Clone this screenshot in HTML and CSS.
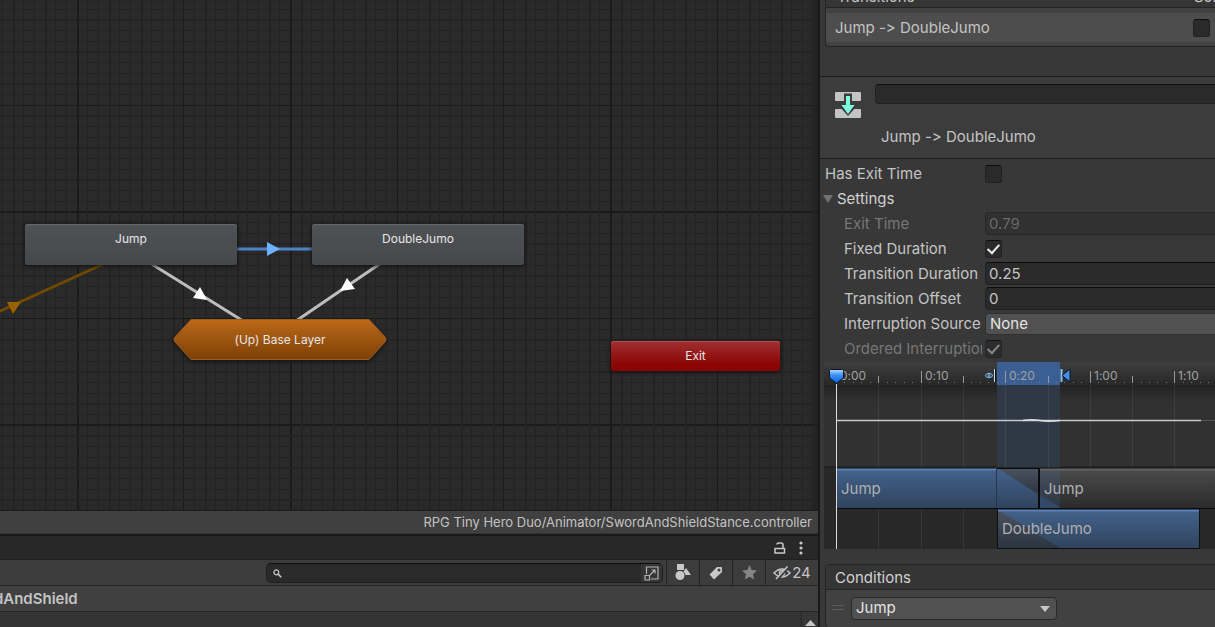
FILE: index.html
```html
<!DOCTYPE html>
<html lang="en">
<head>
  <meta charset="UTF-8">
  <title>Animator</title>
  <link rel="stylesheet" href="styles.css">
</head>
<body>
  <main class="left">
    <section class="graph">
      <svg class="canvas" width="100%" height="100%">
        <defs>
          <linearGradient id="orange" x1="0" y1="0" x2="0" y2="1">
            <stop offset="0" stop-color="#bc6918"/>
            <stop offset="1" stop-color="#7c4006"/>
          </linearGradient>
        </defs>
        <g id="grid"></g>
        <g fill="none" stroke-width="3">
          <path d="M-4 313L110 261" stroke="#704900"/>
          <path d="M237 249H313" stroke="#4f82c4"/>
          <path d="M150 263L243 321M381 263L296 321" stroke="#bdbdbd"/>
        </g>
        <path d="M7 302H21L13 314Z" fill="#986200"/>
        <path d="M267 242L280 249L267 256Z" fill="#6cb0ff"/>
        <path d="M200 287L207 300L193 298Z" fill="#fff"/>
        <path d="M347 278L355 289L340 291Z" fill="#fff"/>
        <path class="hex" d="M191 319.500H369L385 337Q387 339.500 385 342L369 359.500H191L175 342Q173 339.500 175 337Z" fill="url(#orange)" stroke="#9a5d20"/>
      </svg>
      <div class="node jump">Jump</div>
      <div class="node double-jump">DoubleJumo</div>
      <div class="node base-layer">(Up) Base Layer</div>
      <div class="node exit">Exit</div>
    </section>
    <div class="path-bar">RPG Tiny Hero Duo/Animator/SwordAndShieldStance.controller</div>

    <section class="project">
      <div class="tab-bar">
        <button class="icon-btn" aria-label="Lock">
          <svg width="12" height="14" viewBox="0 0 12 14" fill="none" stroke="#c8c8c8" stroke-width="1.500"><path d="M1 7.500H10.500V12H1ZM9 7V4Q9 2 7 2H5Q3 2 3 3.500"/></svg>
        </button>
        <button class="icon-btn" aria-label="More">
          <svg width="4" height="14" viewBox="0 0 4 14" fill="#c8c8c8"><circle cx="2" cy="2" r="1.600"/><circle cx="2" cy="7" r="1.600"/><circle cx="2" cy="12" r="1.600"/></svg>
        </button>
      </div>
      <div class="toolbar">
        <div class="search">
          <svg width="9" height="9" viewBox="0 0 10 10" fill="none" stroke="#c4c4c4" stroke-width="1.400"><circle cx="3.700" cy="3.700" r="2.700"/><path d="M5.700 5.700L9.200 9.200" stroke-width="1.800"/></svg>
          <input type="text" aria-label="Search">
          <button class="search-open" aria-label="Open search window">
            <svg width="15" height="15" viewBox="0 0 15 15" fill="none" stroke="#b4b4b4" stroke-width="1.200"><path d="M2.500 8V1H14V13H7M1 9.500H5.500V14H1ZM6 9L11 4M7.500 4H11V7.500"/></svg>
          </button>
        </div>
        <button class="tool" aria-label="Filter by type">
          <svg width="16" height="17" viewBox="0 0 16 17" fill="#c8c8c8"><rect x="2" width="7" height="6"/><circle cx="5" cy="11.500" r="4.500"/><path d="M11 4L16 11H10.500Q10 8.500 8.500 7.500Z"/></svg>
        </button>
        <button class="tool" aria-label="Filter by label">
          <svg width="14" height="14" viewBox="0 0 14 14" fill="#c8c8c8"><path fill-rule="evenodd" d="M8 1H12Q13 1 13 2V6L5.500 13Q5 13.500 4.500 13L1 9Q.5 8.500 1 8ZM10 2.500A1.500 1.500 0 1 0 10 5.500A1.500 1.500 0 1 0 10 2.500Z"/></svg>
        </button>
        <button class="tool" aria-label="Favorites">
          <svg width="15" height="15" viewBox="0 0 15 15" fill="#858585"><path d="M7.500 0L9.600 5L15 5.500L11 9.200L12.200 14.500L7.500 11.700L2.800 14.500L4 9.200L0 5.500L5.400 5Z"/></svg>
        </button>
        <button class="tool hidden-count">
          <svg width="18" height="14" viewBox="0 0 18 14" fill="none" stroke="#c4c4c4" stroke-width="1.600"><path d="M1 7Q9-1 17 7Q9 15 1 7Z"/><circle cx="9" cy="7" r="2.500"/><path d="M15.500 1L4 13.500" stroke="#3c3c3c" stroke-width="3"/><path d="M14.500 .5L3 13"/></svg>24</button>
      </div>
      <div class="breadcrumb"><span>SwordAndShield</span></div>
      <div class="assets">
        <button class="scroll-up" aria-label="Scroll up"><svg width="11" height="6"><path d="M0 6L5.500 0L11 6Z" fill="#c4c4c4"/></svg></button>
      </div>
    </section>
  </main>

  <aside class="inspector">
    <section class="transitions">
      <div class="transitions-head"><span>Transitions</span><span>Solo</span></div>
      <div class="transition-row">
        <label for="solo">Jump -&gt; DoubleJumo</label>
        <input type="checkbox" id="solo">
      </div>
    </section>

    <header class="title">
      <svg width="28" height="28" viewBox="0 0 28 28"><rect x="1" y="1" width="26" height="9" rx="1" fill="#c4c4c4"/><rect x="1" y="18" width="26" height="9" rx="1" fill="#c4c4c4"/><path d="M10 2.500H18V13H22V16L14 25L6 16V13H10Z" fill="#3c3c3c"/><path d="M12 5H16V14H20.500L14 23L7.500 14H12Z" fill="#7dffe0"/></svg>
      <div class="title-main">
        <input type="text" class="name" aria-label="Transition name">
        <h1>Jump -&gt; DoubleJumo</h1>
      </div>
    </header>

    <form class="settings">
      <div class="row"><label for="exit-on">Has Exit Time</label><input type="checkbox" id="exit-on"></div>
      <button type="button" class="foldout"><svg width="10" height="8"><path d="M0 0H10L5 8Z" fill="#727272"/></svg>Settings</button>
      <div class="row sub off"><label for="exit-time">Exit Time</label><input type="text" id="exit-time" value="0.79" disabled></div>
      <div class="row sub"><label for="fixed">Fixed Duration</label><input type="checkbox" id="fixed" checked></div>
      <div class="row sub"><label for="duration">Transition Duration</label><input type="text" id="duration" value="0.25"></div>
      <div class="row sub"><label for="offset">Transition Offset</label><input type="text" id="offset" value="0"></div>
      <div class="row sub"><label for="source">Interruption Source</label><select id="source"><option>None</option></select></div>
      <div class="row sub off"><label for="ordered">Ordered Interruption</label><input type="checkbox" id="ordered" checked disabled></div>
    </form>

    <section class="timeline">
      <svg width="100%" height="187">
        <defs>
          <linearGradient id="ruler" x1="0" y1="0" x2="0" y2="1"><stop offset="0" stop-color="#3e3e3e"/><stop offset="1" stop-color="#282828"/></linearGradient>
          <linearGradient id="shade" x1="0" y1="0" x2="0" y2="1"><stop offset="0" stop-color="#222"/><stop offset="1" stop-color="#313131"/></linearGradient>
          <linearGradient id="clip" x1="0" y1="0" x2="0" y2="1"><stop offset="0" stop-color="#44628c"/><stop offset="1" stop-color="#2f435d"/></linearGradient>
          <linearGradient id="clip-off" x1="0" y1="0" x2="0" y2="1"><stop offset="0" stop-color="#4b4b4b"/><stop offset="1" stop-color="#2b2b2b"/></linearGradient>
          <linearGradient id="clip-fade" x1="0" y1="0" x2="0" y2="1"><stop offset="0" stop-color="#4a5260"/><stop offset="1" stop-color="#2d3541"/></linearGradient>
          <linearGradient id="pin" x1="0" y1="0" x2="0" y2="1"><stop offset="0" stop-color="#b9dcff"/><stop offset=".4" stop-color="#3b90f5"/><stop offset="1" stop-color="#0a62e0"/></linearGradient>
        </defs>
        <rect width="100%" height="187" fill="#282828"/>
        <rect width="100%" height="23" fill="url(#ruler)"/>
        <rect y="23" width="100%" height="82" fill="#313131"/>
        <rect y="23" width="100%" height="16" fill="url(#shade)"/>
        <rect y="104" width="100%" height="2" fill="#222"/>
        <rect x="173" width="63" height="23" fill="#3b5f92"/>
        <rect x="173" y="23" width="63" height="82" fill="#2f3946"/>
        <g id="ticks"></g>
        <path d="M13 58.500H377" stroke="#c8c8c8" stroke-width="1.500"/>
        <path d="M377 58.500H800" stroke="#555"/>
        <path d="M199 58.500Q208 57 216 58.500T236 58.500" fill="none" stroke="#ddd" stroke-width="1.500"/>

        <rect y="106" x="12" width="100%" height="41" fill="#0c0c0c"/>
        <rect x="13" y="107" width="201" height="39" fill="url(#clip)"/>
        <path d="M175 107H214V132Z" fill="url(#clip-fade)"/>
        <rect x="216" y="107" width="100%" height="39" fill="url(#clip-off)"/>
        <rect x="216" y="107" width="20" height="39" fill="url(#clip-fade)"/>
        <path d="M216 133L236 145V146H216Z" fill="#34496a"/>
        <path d="M13 107.500H173" stroke="#5a80b5" stroke-width="2"/>
        <path d="M216 107.500H800" stroke="#646464" stroke-width="2"/>
        <path d="M172.500 107V146" stroke="#26374e"/>

        <rect x="173" y="147" width="203" height="40" fill="#0c0f14"/>
        <rect x="174" y="148" width="201" height="38" fill="url(#clip)"/>
        <path d="M174 148L236 186H174Z" fill="url(#clip-fade)"/>
        <path d="M174 148.500H375" stroke="#5a80b5" stroke-width="2"/>

        <g class="clip-text">
          <text x="17" y="132">Jump</text>
          <text x="220" y="132">Jump</text>
          <text x="178" y="172">DoubleJumo</text>
        </g>

        <path d="M12.500 22V187" stroke="#dcdcdc"/>
        <path d="M6.500 7.500H18.500Q19.500 7.500 19.500 8.500V15Q19.500 16 18.500 16.500L12.500 21.500L6.500 16.500Q5.500 16 5.500 15V8.500Q5.500 7.500 6.500 7.500Z" fill="url(#pin)" stroke="#10151c"/>
        <g fill="none" stroke="#7cc0ff"><path d="M161 13.500Q165 9 169 13.500Q165 18 161 13.500Z"/><circle cx="165" cy="13.500" r="1"/><path d="M170.500 7V20" stroke="#c4ddf8"/><path d="M171.500 7V20" stroke="#101418"/></g>
        <path d="M237.500 7V20" stroke="#83c5ff" stroke-width="2"/><path d="M246 7V20L238 13.500Z" fill="#438eea" stroke="#0e1722"/>
      </svg>
    </section>

    <section class="conditions">
      <h2>Conditions</h2>
      <div class="condition">
        <span class="handle"></span>
        <div class="picker">
          <select aria-label="Condition parameter"><option>Jump</option></select>
          <svg width="10" height="6"><path d="M0 0H10L5 6Z" fill="#c8c8c8"/></svg>
        </div>
      </div>
    </section>
  </aside>

  <script src="script.js"></script>
</body>
</html>
```

FILE: styles.css
```css
* { box-sizing: border-box; }
body { margin: 0; height: 100vh; overflow: hidden; display: grid; grid-template-columns: minmax(0, 1fr) 395px; background: #383838; color: #c4c4c4; font: 15px/20px Inter, sans-serif; font-feature-settings: "calt" 0; }
button, input, select { font: inherit; color: inherit; margin: 0; padding: 0; border: 0; border-radius: 0; background: none; }
svg { display: block; flex: none; }

/* animator graph */
.left { display: flex; flex-direction: column; min-width: 0; height: 100vh; border-right: 2px solid #191919; }
.graph { position: relative; flex: 1; min-height: 0; overflow: hidden; background: #2a2a2a; border-bottom: 1px solid #1c1c1c; box-shadow: inset -6px 0 6px -3px #1f1f1f; }
.canvas { position: absolute; left: 0; top: 0; }
.hex { filter: drop-shadow(0 2px 2px #151515); }
.node { position: absolute; font-size: 12px; line-height: 16px; text-align: center; color: #e6e6e6; border-radius: 3px; }
.jump, .double-jump { top: 224px; width: 212px; height: 41px; padding-top: 7px; background: linear-gradient(#4f5356, #46474b); box-shadow: inset 0 1px #64686a, 0 1px 4px #111; }
.jump { left: 25px; }
.double-jump { left: 312px; }
.base-layer { left: 173px; top: 319px; width: 214px; height: 41px; padding-top: 13px; }
.exit { left: 611px; top: 341px; width: 169px; height: 30px; padding-top: 7px; background: linear-gradient(#a03030, #8b0303 80%); box-shadow: inset 0 1px #b45050, 0 1px 4px #111; }
.path-bar { height: 23px; padding-right: 6px; background: #404040; border-bottom: 1px solid #333; font-size: 13px; line-height: 23px; text-align: right; white-space: nowrap; }

/* project panel */
.project { background: #3c3c3c; border-top: 2px solid #191919; }
.tab-bar { display: flex; justify-content: flex-end; align-items: center; gap: 13px; height: 24px; padding-right: 15px; background: #282828; border-bottom: 1px solid #1f1f1f; }
.toolbar { display: flex; justify-content: flex-end; height: 26px; border-bottom: 1px solid #232323; }
.search { display: flex; align-items: center; width: 397px; height: 20px; margin: 3px 3px 0 0; padding-left: 6px; background: #2a2a2a; border: 1px solid #1f1f1f; border-top-color: #0d0d0d; border-radius: 5px; overflow: hidden; }
.search input { flex: 1; min-width: 0; padding: 0 4px; }
.search-open { display: flex; align-items: center; justify-content: center; width: 21px; height: 20px; background: #353535; }
.tool { display: flex; align-items: center; justify-content: center; width: 33px; border-left: 1px solid #232323; }
.hidden-count { width: 53px; gap: 1px; }
.breadcrumb { display: flex; height: 26px; overflow: hidden; background: #404040; border-bottom: 1px solid #232323; font-weight: 600; line-height: 25px; }
.breadcrumb span { margin-left: -43px; }
.assets { display: flex; justify-content: flex-end; height: 15px; background: #333; }
.scroll-up { display: flex; justify-content: center; align-items: flex-end; width: 17px; height: 14px; border-left: 1px solid #282828; background: #373737; }

/* inspector */
.inspector { min-width: 0; height: 100vh; overflow: hidden; }
.transitions { margin: -17px 0 29px 5px; border: 1px solid #232323; border-right: 0; border-radius: 0 0 0 4px; background: #414141; }
.transitions-head { display: flex; justify-content: space-between; height: 24px; padding: 0 0 0 11px; line-height: 26px; border-bottom: 1px solid #232323; background: #353535; }
.transitions-head span:last-child { width: 21px; white-space: nowrap; }
.transition-row { display: flex; align-items: center; justify-content: space-between; height: 29px; margin: 5px 0 4px; padding: 0 5px 0 9px; background: #4d4d4d; }
input[type=checkbox] { appearance: none; display: grid; place-items: center; width: 17px; height: 18px; background: #2a2a2a; border: 1px solid #212121; border-top-color: #0d0d0d; border-radius: 3px; }
input[type=checkbox]:checked::after { content: ""; width: 5px; height: 10px; border: solid #eee; border-width: 0 2px 2px 0; transform: rotate(42deg) translate(-1px, -1px); }
.title { display: flex; height: 83px; padding: 7px 0 0 14px; background: #3c3c3c; border-top: 1px solid #1a1a1a; border-bottom: 1px solid #1a1a1a; }
.title > svg { margin-top: 7px; }
.title-main { flex: 1; margin-left: 13px; }
.name { display: block; width: 100%; height: 20px; background: #2a2a2a; border: 1px solid #212121; border-top-color: #0d0d0d; border-right: 0; border-radius: 4px 0 0 4px; }
h1, h2 { margin: 0; font-size: 15px; font-weight: 400; }
h1 { margin: 23px 0 0 6px; }
.settings { padding: 2px 0 0 5px; }
.row { display: flex; align-items: center; height: 25px; }
.row label { width: 160px; flex: none; overflow: hidden; white-space: nowrap; }
.sub label { width: 138px; margin: 0 3px 0 19px; }
.off label, .off input { color: #777; }
.off input[type=checkbox]:checked::after { border-color: #999; }
.off input { opacity: .8; }
.row input[type=text] { flex: 1; min-width: 0; height: 23px; padding-left: 3px; background: #2a2a2a; border: 1px solid #212121; border-top-color: #0d0d0d; border-right: 0; border-radius: 4px 0 0 4px; }
.row input[type=text]:disabled { background: #303030; border-color: #242424; }
.row select { appearance: none; flex: 1; height: 22px; padding: 0 0 2px 4px; background: #515151; border: 1px solid #303030; border-right: 0; border-radius: 4px 0 0 4px; color: #e4e4e4; }
.foldout { display: flex; align-items: center; gap: 4px; height: 25px; margin-left: -2px; color: #d2d2d2; }

.timeline { margin: 1px 0 15px 4px; }
.timeline text { fill: #a0a0a0; font-size: 12px; }
.timeline .clip-text text { fill: #b0b0b0; font-size: 15px; }

.conditions { margin-left: 5px; border: 1px solid #232323; border-right: 0; border-radius: 5px 0 0 5px; background: #414141; }
h2 { height: 25px; padding-left: 9px; line-height: 26px; background: #353535; border-bottom: 1px solid #232323; border-radius: 5px 0 0 0; color: #d2d2d2; }
.condition { display: flex; padding: 7px 0 8px 6px; }
.handle { width: 12px; height: 5px; margin: 8px 7px 0 0; border: solid #5c5c5c; border-width: 1px 0; }
.picker { display: grid; align-items: center; width: 206px; }
.picker select, .picker svg { grid-area: 1 / 1; }
.picker select { appearance: none; height: 23px; padding: 0 0 1px 4px; background: #515151; border: 1px solid #282828; border-radius: 4px; color: #e4e4e4; }
.picker svg { justify-self: end; margin-right: 7px; pointer-events: none; }
```

FILE: script.js
```js
// canvas grid: a line every 10.66px, a dark one every tenth
const gap = 32 / 3;
const originX = 77;
const originY = 212;
let lines = '';
for (let i = -30; i < 240; i++) {
  const major = i % 10 === 0;
  const strong = i % 3 === 0;
  const color = major ? '#1b1b1b' : '#232323';
  const x = originX + Math.floor(i * gap);
  const y = originY + Math.floor(i * gap);
  const wx = (major ? [0, 20, 50].includes(i) : strong) ? 2 : 1;
  const wy = (major ? i % 20 === 0 : strong) ? 2 : 1;
  lines += `<rect x="${x}" width="${wx}" height="100%" fill="${color}"/>`;
  lines += `<rect y="${y - wy + 1}" width="100%" height="${wy}" fill="${color}"/>`;
}
document.getElementById('grid').innerHTML = lines;

// ruler: five frames between the tall ticks, a label on every second one
const labels = ['0:00', '', '0:10', '', '0:20', '', '1:00', '', '1:10', ''];
const step = 42.3;
let ticks = '';
labels.forEach((label, i) => {
  const x = Math.round(12 + i * step);
  ticks += `<rect x="${x}" y="23" width="1" height="164" fill="#fff" fill-opacity=".07"/>`;
  ticks += `<rect x="${x}" y="${label ? 9 : 14}" width="1" height="${label ? 12 : 7}" fill="#999"/>`;
  for (let f = 1; f < 5; f++) {
    ticks += `<rect x="${Math.round(12 + (i + f / 5) * step)}" y="20" width="1" height="1" fill="#777"/>`;
  }
  if (label) ticks += `<text x="${x + 4}" y="18">${label}</text>`;
});
document.getElementById('ticks').innerHTML = ticks;
```
